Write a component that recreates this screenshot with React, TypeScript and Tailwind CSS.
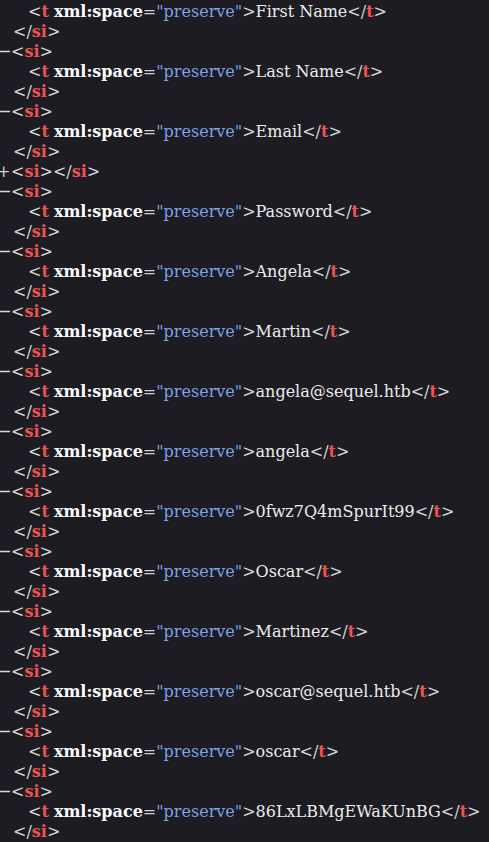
import React from "react";

type Line =
  | { kind: "t"; value: string }
  | { kind: "close" }
  | { kind: "open" }
  | { kind: "empty" };

const values = [
  "First Name",
  "Last Name",
  "Email",
  null,
  "Password",
  "Angela",
  "Martin",
  "angela@sequel.htb",
  "angela",
  "0fwz7Q4mSpurIt99",
  "Oscar",
  "Martinez",
  "oscar@sequel.htb",
  "oscar",
  "86LxLBMgEWaKUnBG",
];

// build the diff lines: every value sits in its own <si> block
const lines: Line[] = [];
values.forEach((v, i) => {
  if (v === null) {
    lines.push({ kind: "empty" });
    return;
  }
  if (i > 0) lines.push({ kind: "open" });
  lines.push({ kind: "t", value: v });
  lines.push({ kind: "close" });
});

const Red = ({ children }: { children: React.ReactNode }) => (
  <span className="font-bold text-[#f05252]">{children}</span>
);

const CodeLine = ({ line }: { line: Line }) => {
  if (line.kind === "t") {
    return (
      <div className="pl-[28px] whitespace-pre">
        {"<"}
        <Red>t</Red> <span className="font-bold text-white">xml:space</span>
        <span className="text-[#d0d0d0]">=</span>
        <span className="text-[#7ba3e8]">"preserve"</span>
        {">"}
        <span className="text-[#ececec]">{line.value}</span>
        {"</"}
        <Red>t</Red>
        {">"}
      </div>
    );
  }
  if (line.kind === "close") {
    return (
      <div className="pl-[13px] whitespace-pre">
        {"</"}
        <Red>si</Red>
        {">"}
      </div>
    );
  }
  if (line.kind === "open") {
    return (
      <div className="flex whitespace-pre">
        <span className="w-[11px] font-['DejaVu_Sans_Mono',monospace] text-[#d8d8d8]">─</span>
        <span>
          {"<"}
          <Red>si</Red>
          {">"}
        </span>
      </div>
    );
  }
  return (
    <div className="flex whitespace-pre">
      <span className="w-[11px] text-[#d8d8d8]">
        <span className="-ml-[3px]">+</span>
      </span>
      <span>
        {"<"}
        <Red>si</Red>
        {"></"}
        <Red>si</Red>
        {">"}
      </span>
    </div>
  );
};

export default function App() {
  return (
    <div className="w-[489px] h-[842px] overflow-hidden bg-[#1c1c22] pt-[2px] text-[16px] leading-5 text-[#d8d8d8] font-['DejaVu_Serif',serif]">
      {lines.map((l, i) => (
        <CodeLine key={i} line={l} />
      ))}
    </div>
  );
}
